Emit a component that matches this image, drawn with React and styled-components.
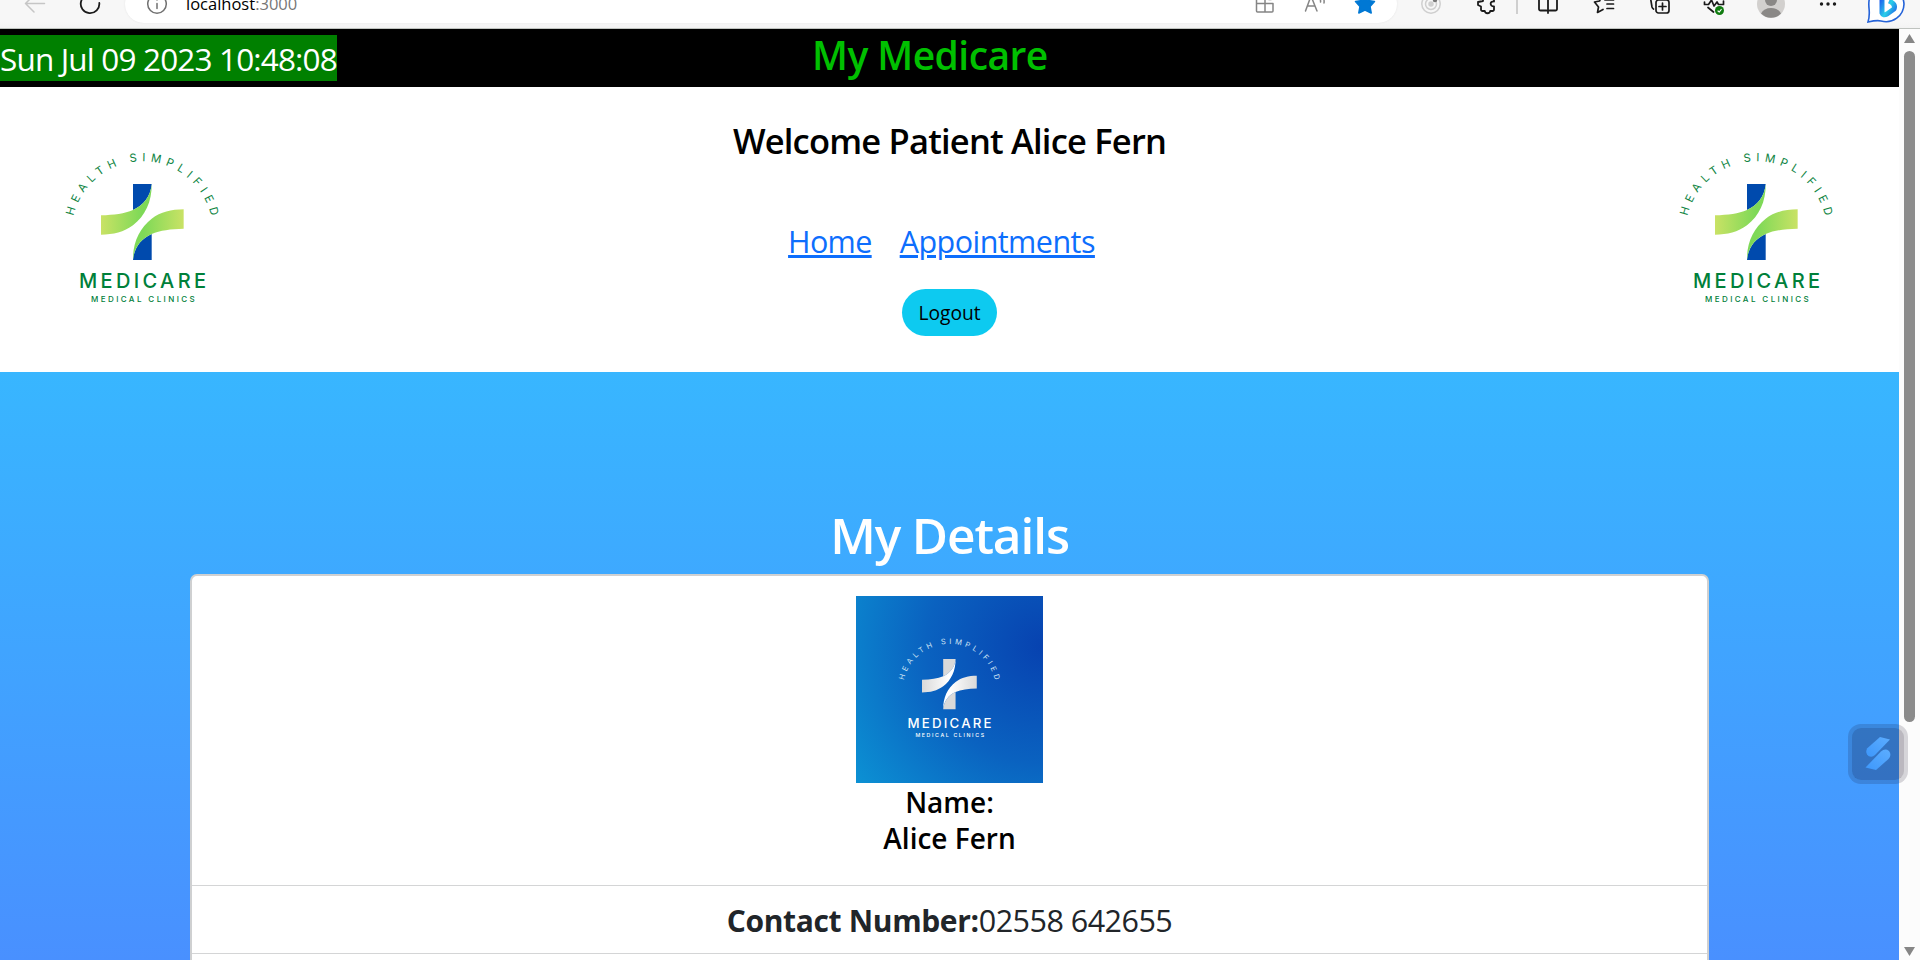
import React, { useId } from "react";
import styled, { createGlobalStyle } from "styled-components";

const GlobalStyle = createGlobalStyle`
  * { box-sizing: border-box; }
  html, body { margin: 0; height: 960px; overflow: hidden; background: #fff; }
  body { font-family: "Open Sans", "Noto Sans", sans-serif; color: #212529; }
  h1, h2, h3, p { margin: 0; }
`;

const Window = styled.div`
  width: 1920px;
  height: 960px;
  display: flex;
  flex-direction: column;
  overflow: hidden;
`;

/* ---------- browser toolbar ---------- */

const Chrome = styled.div`
  height: 29px;
  flex: none;
  background: linear-gradient(#f7f7f7 22px, #f3f3f3 28px);
  border-bottom: 1px solid #bfc3bf;
  overflow: hidden;
`;

const ChromeRow = styled.div`
  height: 38px;
  margin-top: -15px;
  display: flex;
  align-items: center;
`;

const AddressBar = styled.div`
  width: 1272px;
  height: 38px;
  margin-left: 20px;
  padding-right: 17px;
  border-radius: 19px;
  background: #fff;
  box-shadow: 0 0 2px #e2e2e2;
  display: flex;
  align-items: center;
`;

const Slot = styled.svg`
  flex: none;
  width: 30px;
  height: 38px;
  margin-left: ${(p) => p.$gap || 0}px;
  fill: none;
  stroke: ${(p) => p.$color || "#1b1b1b"};
  stroke-width: ${(p) => p.$weight || 1.5};
  stroke-linecap: round;
  stroke-linejoin: round;
`;

const Address = styled.span`
  flex: 1;
  margin-left: 14px;
  font-size: 16.5px;
  line-height: 38px;
  color: #000;
`;

const Port = styled.span`
  color: #767676;
`;

const Divider = styled.i`
  width: 2px;
  height: 20px;
  margin-left: 14px;
  background: #cfcfcf;
`;

const BingIcon = styled.svg`
  flex: none;
  width: 40px;
  height: 38px;
  margin-left: 23px;
`;

function Icon({ gap, color, weight, children }) {
  return (
    <Slot viewBox="-15 -19 30 38" $gap={gap} $color={color} $weight={weight}>
      {children}
    </Slot>
  );
}

function Toolbar() {
  return (
    <Chrome>
      <ChromeRow>
        <Icon gap={20} color="#c6c6c6">
          <path d="M9.500 -.5H-9.500M-1 -9L-9.500 -.5L-1 8" />
        </Icon>
        <Icon gap={25} weight={1.8}>
          <path d="M9.300 -1A9.300 9.300 0 1 1 4 -8.500M5 -12V-7H0" />
        </Icon>
        <AddressBar>
          <Icon gap={17} color="#707070">
            <circle r="9.300" />
            <path d="M0 -.5V4.500M0 -4.300V-4" />
          </Icon>
          <Address>
            localhost<Port>:3000</Port>
          </Address>
          <Icon color="#858585">
            <path d="M-8.500 -8V7A1 1 0 0 0 -7.500 8H7A1 1 0 0 0 8 7V-.5H-8.500M0 -8V8M4 -4.500H6" />
          </Icon>
          <Icon gap={20} color="#858585">
            <path d="M-9.500 7L-4 -8L2 7M-7.500 2H0M4 -6Q6 -4 5.500 -2M8 -7Q9.500 -4 9 -1" />
          </Icon>
          <Icon gap={20} color="#0078d4">
            <path
              fill="#0078d4"
              d="M0 -10L3 -3.500L9.500 -2.500L5 2.500L6.200 9L0 6L-6.200 9L-5 2.500L-9.500 -2.500L-3 -3.500Z"
            />
          </Icon>
        </AddressBar>
        <Icon gap={19} color="#cfcfcf">
          <circle r="9.200" />
          <circle r="5.500" />
          <circle r="2" fill="#cfcfcf" />
          <circle cx="4" cy="-4" r="1.500" fill="#777" stroke="#777" />
        </Icon>
        <Icon gap={26} weight={1.8}>
          <path d="M-4 -8H7V-2.500C2.500 -3 2.500 2.500 7 2.300V5.500A1.500 1.500 0 0 1 5.500 7H3.200C3 10 -2 10 -2.200 7H-4.500A1.500 1.500 0 0 1 -6 5.500V2.500L-9 1V-2L-4 -3Z" />
        </Icon>
        <Divider />
        <Icon gap={15} weight={1.8}>
          <path d="M-1.500 -8H-9V5A1.500 1.500 0 0 0 -7.500 6.500H-1.500M1.500 -8H9V5A1.500 1.500 0 0 1 7.500 6.500H1.500M0 -9V9" />
        </Icon>
        <Icon gap={26} weight={1.7}>
          <path d="M-2 -8L-4.500 -3L-9.500 -2L-5.500 3L-6.500 8.500L-1 5.500M1 -4H9.500M3 0H9.500M3 4.500H9.500" />
        </Icon>
        <Icon gap={26} weight={1.7}>
          <rect x="-4" y="-4" width="13" height="13" rx="2.500" />
          <path d="M2.500 -1V6M-1 2.500H6M-9.500 -6L-8 3Q-7.500 4.500 -6.500 5" />
        </Icon>
        <Icon gap={24} weight={1.7}>
          <path d="M-9.500 -2V.5H-5.500L-2.500 -4L0 2L3 -2L4.500 .5H9.500V-3M-6 3.500L-.5 8" />
          <circle cx="5.500" cy="6.500" r="4.500" fill="#107c10" stroke="none" />
          <path d="M4 7L5.300 8L7.200 5.500" stroke="#fff" strokeWidth="1.200" />
        </Icon>
        <Icon gap={27} color="none">
          <circle r="14" fill="#d2d0ce" />
          <circle cy="-4" r="6" fill="#8a8886" />
          <path d="M-10 9.500Q-7 4 0 4T10 9.500A14 14 0 0 1 -10 9.500Z" fill="#8a8886" />
        </Icon>
        <Icon gap={27} color="none">
          <g fill="#1b1b1b">
            <circle cx="-6.500" r="1.700" />
            <circle r="1.700" />
            <circle cx="6.500" r="1.700" />
          </g>
        </Icon>
        <BingIcon viewBox="-20 -19 40 38">
          <defs>
            <linearGradient id="bing" x1="0" y1="0" x2="1" y2="1">
              <stop offset="0" stopColor="#1b48ef" />
              <stop offset=".6" stopColor="#2ad0e8" />
              <stop offset="1" stopColor="#1e6fe8" />
            </linearGradient>
          </defs>
          <path
            d="M-18 18C-15 8 -18 5 -17 -3C-16 -12 -8 -17 0 -17A18 18 0 0 1 18 0A18 18 0 0 1 -5 17Q-9 16 -18 18Z"
            fill="#fff"
            stroke="#2563d8"
            strokeWidth="1.600"
          />
          <path d="M-4 -12V9Q-3 12 1 10L8 5Q10 0 3 -3" fill="none" stroke="url(#bing)" strokeWidth="5" strokeLinejoin="round" />
        </BingIcon>
      </ChromeRow>
    </Chrome>
  );
}

/* ---------- clinic logo ---------- */

const themes = {
  colour: { arc: "#0f8543", name: "#00803a", post: "#004aad", mid: "#7ed957", edge: "#c9e265" },
  white: { arc: "#cfe4f5", name: "#ffffff", post: "#d9d9d9", mid: "#ffffff", edge: "#d9d9d9" },
};

const LogoText = styled.text`
  font-family: Inter, "Open Sans", sans-serif;
  font-weight: ${(p) => p.$weight || 400};
  font-size: ${(p) => p.$size}px;
`;

function LogoArt({ tone }) {
  const id = useId();
  const c = themes[tone];
  const band = "M183 256C222 255 254 251 279 240C310 226 332 200 335 162C336 215 315 258 279 286C252 306 220 314 183 314Z";
  const post = "M279 162H335C332 200 310 226 279 240Z";
  return (
    <>
      <defs>
        <linearGradient id={`${id}band`} gradientUnits="userSpaceOnUse" x1="183" y1="0" x2="335" y2="0">
          <stop offset="0" stopColor={c.edge} />
          <stop offset=".8" stopColor={c.mid} />
        </linearGradient>
        <path id={`${id}arc`} d="M95 306A212 212 0 0 1 519 306" />
      </defs>
      <LogoText $size={34} fill={c.arc} textLength="570">
        <textPath href={`#${id}arc`} startOffset="48">
          HEALTH SIMPLIFIED
        </textPath>
      </LogoText>
      {[0, 180].map((turn) => (
        <g key={turn} transform={`rotate(${turn} 307 276)`}>
          <path d={post} fill={c.post} />
          <path d={band} fill={`url(#${id}band)`} />
        </g>
      ))}
      <LogoText $size={60} $weight={500} fill={c.name} x="117" y="473" textLength="381">
        MEDICARE
      </LogoText>
      <LogoText $size={24} $weight={500} fill={c.name} x="153" y="516" textLength="311">
        MEDICAL CLINICS
      </LogoText>
    </>
  );
}

const HeaderLogo = styled.svg`
  flex: none;
  width: 210px;
  height: 200px;
  margin-top: 43px;
`;

const Avatar = styled.svg`
  display: block;
  width: 187px;
  height: 187px;
  margin: 0 auto 1px;
`;

/* ---------- page ---------- */

const Viewport = styled.div`
  flex: 1;
  min-height: 0;
  display: flex;
`;

const Page = styled.main`
  width: 1899px;
  height: 931px;
  display: flex;
  flex-direction: column;
  overflow: hidden;
`;

const TopStrip = styled.div`
  height: 58px;
  flex: none;
  display: flex;
  align-items: flex-start;
  background: #000;
`;

const Clock = styled.div`
  width: 337px;
  height: 46px;
  margin-top: 6px;
  background: #008000;
  color: #fff;
  font-size: 31.5px;
  line-height: 48px;
  letter-spacing: -0.84px;
  white-space: nowrap;
`;

const Brand = styled.h2`
  margin-left: 475px;
  font-size: 39px;
  font-weight: 600;
  line-height: 52px;
  letter-spacing: -0.55px;
  color: #00c000;
`;

const Header = styled.header`
  height: 285px;
  flex: none;
  display: flex;
  justify-content: space-between;
  padding: 0 35px 0 40px;
  background: #fff;
`;

const HeaderCenter = styled.div`
  display: flex;
  flex-direction: column;
  align-items: center;
  padding-top: 32px;
  margin-right: 5px;
`;

const Welcome = styled.h3`
  font-size: 34.5px;
  font-weight: 600;
  line-height: 43px;
  letter-spacing: -0.8px;
  color: #000;
`;

const Nav = styled.nav`
  display: flex;
  gap: 28px;
  margin: 55px 16px 24px 0;
`;

const NavLink = styled.a`
  font-size: 30.5px;
  line-height: 48px;
  letter-spacing: ${(p) => p.$tracking}px;
  color: #0d6efd;
  text-decoration: underline;
  text-decoration-thickness: 3px;
  text-underline-offset: 2px;
`;

const LogoutButton = styled.button`
  width: 95px;
  height: 47px;
  padding: 0;
  border: 0;
  border-radius: 24px;
  background: #0dcaf0;
  color: #000;
  font: 19.2px/47px "Open Sans", "Noto Sans", sans-serif;
`;

const Details = styled.section`
  height: 588px;
  flex: none;
  display: flex;
  flex-direction: column;
  align-items: center;
  padding-top: 133px;
  background: linear-gradient(#38b6ff, #4990ff);
`;

const DetailsTitle = styled.h1`
  font-size: 49.5px;
  font-weight: 600;
  line-height: 60px;
  letter-spacing: -1.1px;
  color: #fff;
`;

const Card = styled.div`
  width: 1519px;
  height: 460px;
  flex: none;
  margin-top: 9px;
  border: 2px solid #cfd0d1;
  border-radius: 7px;
  background: #fff;
  text-align: center;
`;

const CardBody = styled.div`
  height: 309px;
  padding-top: 20px;
`;

const CardTitle = styled.h3`
  font-size: 28px;
  font-weight: 600;
  line-height: 36px;
  color: #000;
`;

const ListItem = styled.div`
  height: 68px;
  padding-top: 1px;
  border-top: 1px solid #d4d5d6;
  font-size: 30.5px;
  line-height: 66px;
  letter-spacing: -0.52px;
`;

const Label = styled.strong`
  font-size: 30px;
  font-weight: 700;
  letter-spacing: -0.35px;
`;

/* ---------- scrollbar and floating widget ---------- */

const ScrollTrack = styled.div`
  width: 21px;
  height: 931px;
  display: flex;
  flex-direction: column;
  align-items: center;
  padding: 5px 0 4px;
  background: #fcfcfc;
`;

const ScrollThumb = styled.div`
  width: 11px;
  height: 671px;
  margin: 8px 0 auto;
  border-radius: 6px;
  background: #8b8b8b;
`;

const Arrow = styled.svg`
  width: 11px;
  height: 9px;
  fill: #868686;
`;

const FloatingWidget = styled.div`
  position: fixed;
  left: 1848px;
  top: 724px;
  width: 60px;
  height: 60px;
  border: 4px solid rgba(20, 10, 35, 0.16);
  border-radius: 13px;
  background: rgba(10, 0, 25, 0.27);
  background-clip: padding-box;
`;

const WidgetMark = styled.svg`
  display: block;
  width: 52px;
  height: 52px;
`;

export default function App() {
  return (
    <>
      <GlobalStyle />
      <Window>
        <Toolbar />
        <Viewport>
          <Page>
            <TopStrip>
              <Clock>Sun Jul 09 2023 10:48:08</Clock>
              <Brand>My Medicare</Brand>
            </TopStrip>
            <Header>
              <HeaderLogo viewBox="0 0 630 600">
                <LogoArt tone="colour" />
              </HeaderLogo>
              <HeaderCenter>
                <Welcome>Welcome Patient Alice Fern</Welcome>
                <Nav>
                  <NavLink $tracking={-0.65}>Home</NavLink>
                  <NavLink $tracking={-0.54}>Appointments</NavLink>
                </Nav>
                <LogoutButton>Logout</LogoutButton>
              </HeaderCenter>
              <HeaderLogo viewBox="0 0 630 600">
                <LogoArt tone="colour" />
              </HeaderLogo>
            </Header>
            <Details>
              <DetailsTitle>My Details</DetailsTitle>
              <Card>
                <CardBody>
                  <Avatar viewBox="-116 -123 847 847">
                    <defs>
                      <radialGradient id="sky" cx="1" cy=".27" r="1.250">
                        <stop offset="0" stopColor="#0742b0" />
                        <stop offset=".5" stopColor="#0a62c0" />
                        <stop offset="1" stopColor="#0c92d4" />
                      </radialGradient>
                    </defs>
                    <rect x="-116" y="-123" width="847" height="847" fill="url(#sky)" />
                    <LogoArt tone="white" />
                  </Avatar>
                  <CardTitle>Name:</CardTitle>
                  <CardTitle>Alice Fern</CardTitle>
                </CardBody>
                <ListItem>
                  <Label>Contact Number:</Label>02558 642655
                </ListItem>
                <ListItem />
              </Card>
            </Details>
          </Page>
          <ScrollTrack>
            <Arrow viewBox="0 0 11 9">
              <path d="M5.500 0L11 9H0Z" />
            </Arrow>
            <ScrollThumb />
            <Arrow viewBox="0 0 11 9">
              <path d="M0 0H11L5.500 9Z" />
            </Arrow>
          </ScrollTrack>
        </Viewport>
        <FloatingWidget>
          <WidgetMark viewBox="0 0 52 52">
            <defs>
              <linearGradient id="mark" x1="0" y1="1" x2="1" y2="0">
                <stop offset="0" stopColor="#3d97fb" />
                <stop offset="1" stopColor="#5cadff" />
              </linearGradient>
            </defs>
            <path d="M28 9L38 11.500L23 27Q20 30 16.500 28Q13 25 15 20.500Z" fill="url(#mark)" />
            <path d="M24 42L13.500 39.500L29 23.500Q33 20 37 23Q40 27 36.500 31Z" fill="url(#mark)" />
          </WidgetMark>
        </FloatingWidget>
      </Window>
    </>
  );
}
